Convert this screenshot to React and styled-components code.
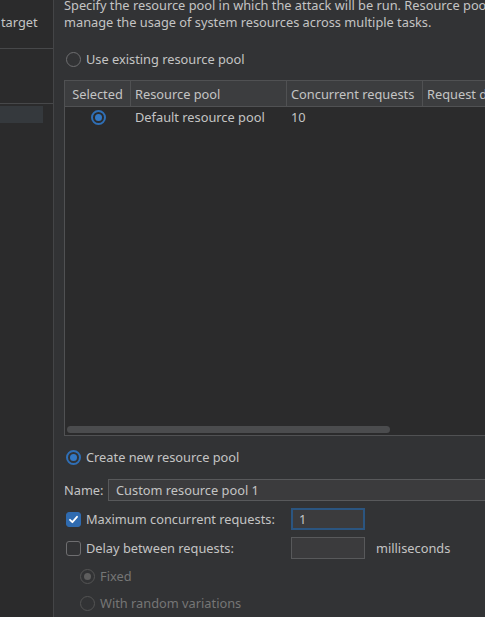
import React from "react";
import styled, { createGlobalStyle } from "styled-components";

const GlobalStyle = createGlobalStyle`
  html, body {
    margin: 0;
    padding: 0;
    background: #323335;
    overflow: hidden;
  }
  body {
    font-family: "Noto Sans", "Open Sans", sans-serif;
    font-size: 12.8px;
    color: #c4c4c4;
  }
`;

const Frame = styled.div`
  display: flex;
  width: 485px;
  height: 617px;
  overflow: hidden;
`;

const Sidebar = styled.div`
  flex: 0 0 53px;
  background: #2b2b2c;
  border-right: 1px solid #444547;
  display: flex;
  flex-direction: column;
  overflow: hidden;
`;

const SideItem = styled.div`
  height: 49px;
  box-sizing: border-box;
  border-bottom: 1px solid #47484a;
  padding: 13px 0 0 1px;
  white-space: nowrap;
`;

const SideGap = styled.div`
  height: 54px;
  border-bottom: 1px solid #47484a;
`;

const SideSelected = styled.div`
  margin-top: 2px;
  width: 43px;
  height: 17px;
  background: #35393d;
`;

const Main = styled.div`
  flex: 0 0 600px;
  padding-left: 10px;
  display: flex;
  flex-direction: column;
`;

const Description = styled.p`
  margin: -3px 0 0;
  line-height: 17px;
  width: 440px;
`;

const OptionRow = styled.label`
  display: flex;
  align-items: center;
  height: 20px;
  gap: 5px;
  margin-top: ${(p) => p.$top || 0}px;
  margin-left: ${(p) => p.$indent || 2}px;
  color: ${(p) => (p.$disabled ? "#767676" : "#c4c4c4")};
`;

const Radio = styled.span`
  box-sizing: border-box;
  width: 15px;
  height: 15px;
  border-radius: 50%;
  border: 1px solid ${(p) => (p.$disabled ? "#545454" : p.$checked ? "#2f6fb6" : "#6e6e70")};
  ${(p) => p.$checked && !p.$disabled && "border-width: 2px;"}
  display: flex;
  align-items: center;
  justify-content: center;
  flex-shrink: 0;
  &::after {
    content: "";
    display: ${(p) => (p.$checked ? "block" : "none")};
    width: 7px;
    height: 7px;
    border-radius: 50%;
    background: ${(p) => (p.$disabled ? "#5e5e5e" : "#3378c4")};
  }
`;

const Check = styled.span`
  box-sizing: border-box;
  width: 15px;
  height: 15px;
  border-radius: 3px;
  flex-shrink: 0;
  display: flex;
  align-items: center;
  justify-content: center;
  background: ${(p) => (p.$checked ? "#2f6bb0" : "transparent")};
  border: 1px solid ${(p) => (p.$checked ? "#2f6bb0" : "#6e6e70")};
`;

const Table = styled.div`
  margin-top: 11px;
  height: 356px;
  width: 560px;
  box-sizing: border-box;
  border: 1px solid #505153;
  background: #2b2b2c;
  display: flex;
  flex-direction: column;
  position: relative;
`;

const HeaderRow = styled.div`
  display: grid;
  grid-template-columns: 66px 156px 136px 1fr;
  height: 25px;
  background: #3c3d3f;
  border-bottom: 1px solid #505153;
`;

const HeaderCell = styled.div`
  display: flex;
  align-items: center;
  justify-content: ${(p) => (p.$center ? "center" : "flex-start")};
  padding-left: ${(p) => (p.$center ? 0 : 4)}px;
  border-right: 1px solid #505153;
  white-space: nowrap;
  overflow: hidden;
`;

const BodyRow = styled.div`
  display: grid;
  grid-template-columns: 66px 156px 136px 1fr;
  height: 20px;
`;

const BodyCell = styled.div`
  display: flex;
  align-items: center;
  justify-content: ${(p) => (p.$center ? "center" : "flex-start")};
  padding-left: ${(p) => (p.$center ? 0 : 4)}px;
  white-space: nowrap;
`;

const Scrollbar = styled.div`
  position: absolute;
  left: 2px;
  bottom: 2px;
  width: 323px;
  height: 7px;
  border-radius: 4px;
  background: #4b4c4e;
`;

const FieldRow = styled.div`
  display: flex;
  align-items: center;
  height: 22px;
  margin-top: ${(p) => p.$top || 0}px;
`;

const NameLabel = styled.span`
  width: 44px;
`;

const CheckLabel = styled.label`
  width: 227px;
  padding-left: 2px;
  box-sizing: border-box;
  display: flex;
  align-items: center;
  gap: 5px;
`;

const TextInput = styled.div`
  box-sizing: border-box;
  height: 22px;
  width: ${(p) => p.$width}px;
  background: #3b3b3d;
  border: ${(p) => (p.$focused ? "2px solid #2b5580" : "1px solid #58595b")};
  padding-left: ${(p) => (p.$focused ? 6 : 7)}px;
  display: flex;
  align-items: center;
  color: #c4c4c4;
`;

const Unit = styled.span`
  margin-left: 11px;
`;

const CheckMark = () => (
  <svg width="11" height="11" viewBox="0 0 11 11">
    <path d="M2 5.8 L4.4 8.2 L9 2.8" fill="none" stroke="#fff" strokeWidth="1.8" strokeLinecap="round" strokeLinejoin="round" />
  </svg>
);

export default function App() {
  return (
    <>
      <GlobalStyle />
      <Frame>
        <Sidebar>
          <SideItem>target</SideItem>
          <SideGap />
          <SideSelected />
        </Sidebar>
        <Main>
          <Description>
            Specify the resource pool in which the attack will be run. Resource pools
            manage the usage of system resources across multiple tasks.
          </Description>

          <OptionRow $top={18}>
            <Radio />
            Use existing resource pool
          </OptionRow>

          <Table>
            <HeaderRow>
              <HeaderCell $center>Selected</HeaderCell>
              <HeaderCell>Resource pool</HeaderCell>
              <HeaderCell>Concurrent requests</HeaderCell>
              <HeaderCell>Request delay</HeaderCell>
            </HeaderRow>
            <BodyRow>
              <BodyCell $center>
                <Radio $checked />
              </BodyCell>
              <BodyCell>Default resource pool</BodyCell>
              <BodyCell>10</BodyCell>
              <BodyCell />
            </BodyRow>
            <Scrollbar />
          </Table>

          <OptionRow $top={11}>
            <Radio $checked />
            Create new resource pool
          </OptionRow>

          <FieldRow $top={12}>
            <NameLabel>Name:</NameLabel>
            <TextInput $width={420}>Custom resource pool 1</TextInput>
          </FieldRow>

          <FieldRow $top={7}>
            <CheckLabel>
              <Check $checked>
                <CheckMark />
              </Check>
              Maximum concurrent requests:
            </CheckLabel>
            <TextInput $width={74} $focused>1</TextInput>
          </FieldRow>

          <FieldRow $top={7}>
            <CheckLabel>
              <Check />
              Delay between requests:
            </CheckLabel>
            <TextInput $width={74} />
            <Unit>milliseconds</Unit>
          </FieldRow>

          <OptionRow $top={7} $indent={16} $disabled>
            <Radio $checked $disabled />
            Fixed
          </OptionRow>

          <OptionRow $top={7} $indent={16} $disabled>
            <Radio $disabled />
            With random variations
          </OptionRow>
        </Main>
      </Frame>
    </>
  );
}
